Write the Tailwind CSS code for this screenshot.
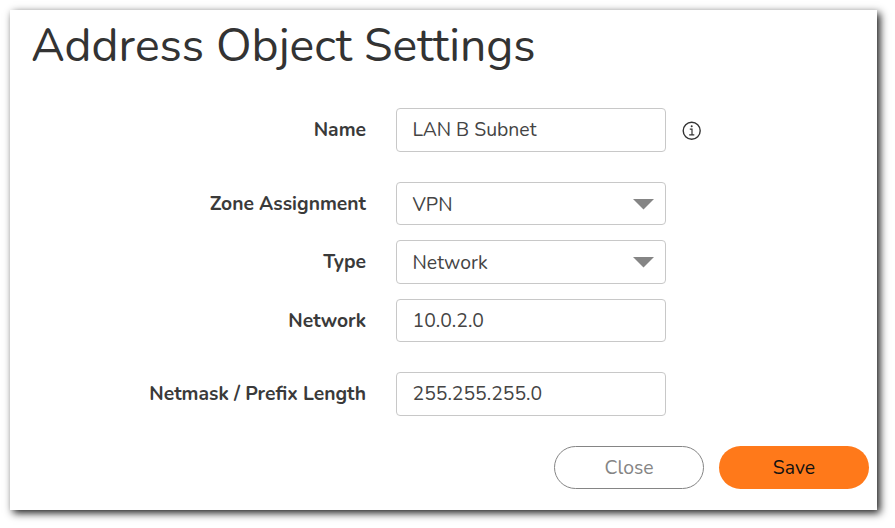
<!DOCTYPE html>
<html lang="en">
<head>
  <meta charset="UTF-8" />
  <meta name="viewport" content="width=device-width, initial-scale=1.0">
  <title>Address Object Settings</title>
  <script src="https://cdn.jsdelivr.net/npm/@tailwindcss/browser@4"></script>
</head>
<body class="h-[528px] pt-[10px] pl-[10px] bg-white font-[Nunito,Lato,sans-serif] text-[#333] overflow-hidden">

<main class="w-[867px] h-[500px] bg-white shadow-[3px_3px_8px_0px_rgba(0,0,0,0.9)]">
  <h1 class="h-[98px] pt-[6px] pl-[21px] text-[46.35px] leading-[60px] whitespace-nowrap">Address Object Settings</h1>

  <!-- Fields -->
  <form class="text-[19.4px] leading-6">
    <div class="flex h-[44px] items-center mb-[30px]">
      <label class="w-[356px] text-right font-bold text-[19.3px] text-[#3a3a3a]">Name</label>
      <div class="ml-[30px] w-[270px] h-full flex items-center border border-[#c8c8c8] rounded-[4px] px-[15.5px] text-[#444]">LAN B Subnet</div>
      <svg class="ml-[16px] mt-[2px] w-[20px] h-[20px]" viewBox="0 0 20 20" fill="none" stroke="#333">
        <circle cx="9.7" cy="9.7" r="8.5" stroke-width="1.4"/>
        <path d="M7.8 8.2h2.2v5.4M7.2 13.9h5.1" stroke-width="1.2"/>
        <circle cx="9.7" cy="5.3" r="1" fill="#333" stroke="none"/>
      </svg>
    </div>
    <div class="flex h-[43px] items-center mb-[15px]">
      <label class="w-[356px] text-right font-bold text-[19.3px] text-[#3a3a3a]">Zone Assignment</label>
      <div class="ml-[30px] w-[270px] h-full flex items-center justify-between border border-[#c8c8c8] rounded-[4px] pl-[15.5px] pr-[11px] text-[#444]">
        <span class="pt-[2px]">VPN</span>
        <svg class="w-[21px] h-[11px] mt-px" viewBox="0 0 21 11" fill="#858585"><path d="M0 0h21L10.5 10.5z"/></svg>
      </div>
    </div>
    <div class="flex h-[44px] items-center mb-[15px]">
      <label class="w-[356px] text-right font-bold text-[19.3px] text-[#3a3a3a]">Type</label>
      <div class="ml-[30px] w-[270px] h-full flex items-center justify-between border border-[#c8c8c8] rounded-[4px] pl-[15.5px] pr-[11px] text-[#444]">
        <span class="pt-[2px]">Network</span>
        <svg class="w-[21px] h-[11px]" viewBox="0 0 21 11" fill="#858585"><path d="M0 0h21L10.5 10.5z"/></svg>
      </div>
    </div>
    <div class="flex h-[43px] items-center mb-[30px]">
      <label class="w-[356px] text-right font-bold text-[19.3px] text-[#3a3a3a]">Network</label>
      <div class="ml-[30px] w-[270px] h-full flex items-center border border-[#c8c8c8] rounded-[4px] px-[15.5px] text-[#444]">10.0.2.0</div>
    </div>
    <div class="flex h-[44px] items-center mb-[30px]">
      <label class="w-[356px] text-right font-bold text-[19.3px] text-[#3a3a3a]">Netmask / Prefix Length</label>
      <div class="ml-[30px] w-[270px] h-full flex items-center border border-[#c8c8c8] rounded-[4px] px-[15.5px] text-[#444]">255.255.255.0</div>
    </div>

    <!-- Actions -->
    <div class="flex justify-end gap-[15px] pr-[8px]">
      <button type="button" class="w-[150px] h-[43px] rounded-full border border-[#858585] text-[#858585]">Close</button>
      <button type="button" class="w-[150px] h-[43px] rounded-full bg-[#ff791a] text-[#111]">Save</button>
    </div>
  </form>
</main>

</body>
</html>
